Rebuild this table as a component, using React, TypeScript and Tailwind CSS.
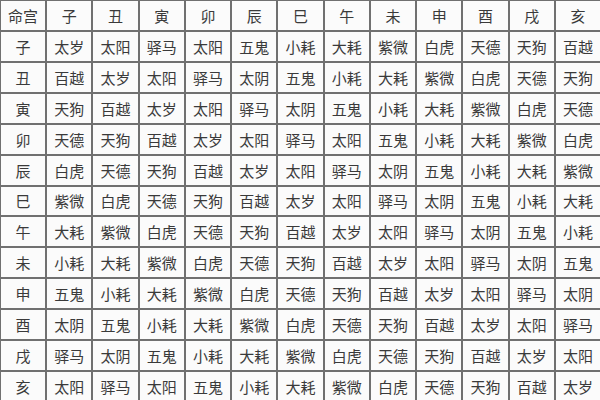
const branches = ["子", "丑", "寅", "卯", "辰", "巳", "午", "未", "申", "酉", "戌", "亥"];

const rows: string[][] = [
  ["太岁", "太阳", "驿马", "太阳", "五鬼", "小耗", "大耗", "紫微", "白虎", "天德", "天狗", "百越"],
  ["百越", "太岁", "太阳", "驿马", "太阴", "五鬼", "小耗", "大耗", "紫微", "白虎", "天德", "天狗"],
  ["天狗", "百越", "太岁", "太阳", "驿马", "太阴", "五鬼", "小耗", "大耗", "紫微", "白虎", "天德"],
  ["天德", "天狗", "百越", "太岁", "太阳", "驿马", "太阳", "五鬼", "小耗", "大耗", "紫微", "白虎"],
  ["白虎", "天德", "天狗", "百越", "太岁", "太阳", "驿马", "太阴", "五鬼", "小耗", "大耗", "紫微"],
  ["紫微", "白虎", "天德", "天狗", "百越", "太岁", "太阳", "驿马", "太阴", "五鬼", "小耗", "大耗"],
  ["大耗", "紫微", "白虎", "天德", "天狗", "百越", "太岁", "太阳", "驿马", "太阴", "五鬼", "小耗"],
  ["小耗", "大耗", "紫微", "白虎", "天德", "天狗", "百越", "太岁", "太阳", "驿马", "太阴", "五鬼"],
  ["五鬼", "小耗", "大耗", "紫微", "白虎", "天德", "天狗", "百越", "太岁", "太阳", "驿马", "太阴"],
  ["太阴", "五鬼", "小耗", "大耗", "紫微", "白虎", "天德", "天狗", "百越", "太岁", "太阳", "驿马"],
  ["驿马", "太阴", "五鬼", "小耗", "大耗", "紫微", "白虎", "天德", "天狗", "百越", "太岁", "太阳"],
  ["太阳", "驿马", "太阳", "五鬼", "小耗", "大耗", "紫微", "白虎", "天德", "天狗", "百越", "太岁"],
];

function Cell({ text }: { text: string }) {
  return (
    <div className="flex items-center justify-center bg-[#fbfbfb] text-[15px] leading-none text-[#3a3a3a]">
      {text}
    </div>
  );
}

export default function App() {
  return (
    <div
      className="w-[600px] h-[400px] overflow-hidden bg-white"
      style={{ fontFamily: '"Noto Sans CJK SC", "Noto Sans", sans-serif' }}
    >
      <div className="grid h-[402px] w-[601px] grid-cols-[repeat(13,1fr)] grid-rows-[repeat(13,1fr)] gap-[2px] bg-[#707070] p-[1px]">
        <Cell text="命宫" />
        {branches.map((b) => (
          <Cell key={"h" + b} text={b} />
        ))}
        {rows.map((row, i) => (
          <>
            <Cell key={"r" + i} text={branches[i]} />
            {row.map((s, j) => (
              <Cell key={i + "-" + j} text={s} />
            ))}
          </>
        ))}
      </div>
    </div>
  );
}
